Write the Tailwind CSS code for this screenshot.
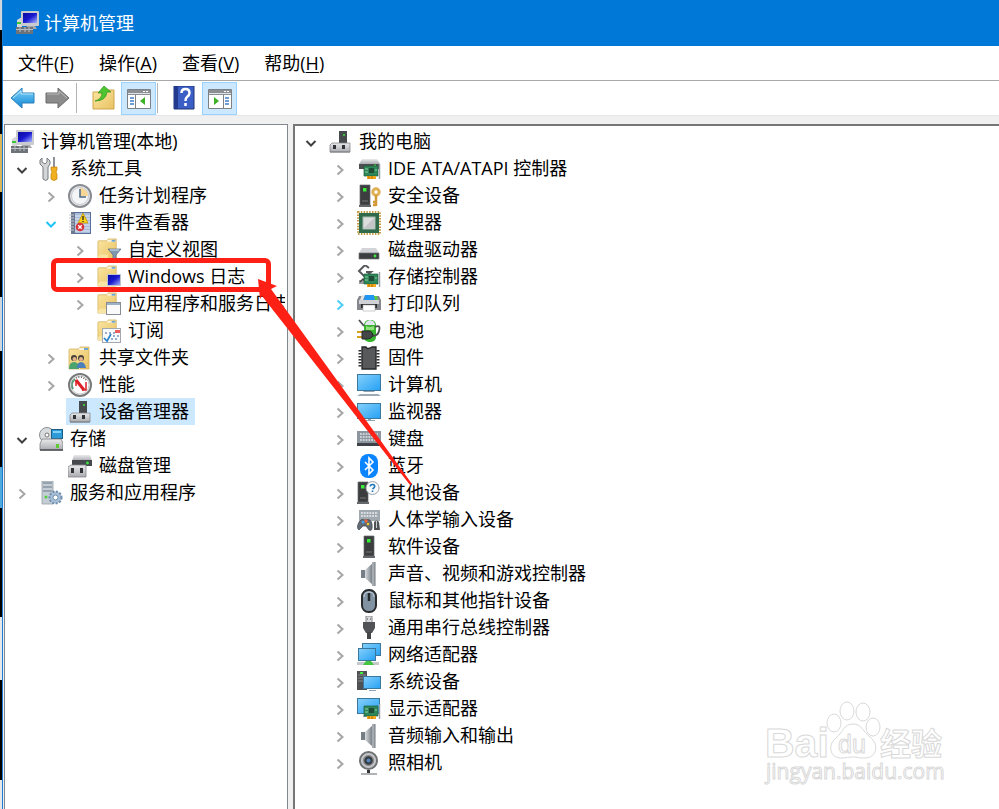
<!DOCTYPE html>
<html lang="zh-CN">
<head>
    <meta charset="UTF-8">
    <meta name="viewport" content="width=device-width, initial-scale=1.0">
    <title>计算机管理</title>
    <script src="https://cdn.jsdelivr.net/npm/@tailwindcss/browser@4"></script>
</head>
<body class="relative flex h-screen overflow-hidden bg-black font-['Open_Sans','Noto_Sans_CJK_SC',sans-serif] text-lg leading-[27px] text-black">

    <!-- Icon set, 24x24 each -->
    <svg class="absolute size-0" aria-hidden="true">
        <defs>
            <linearGradient id="gBlue" x1="0" y1="0" x2="1" y2="1"><stop offset="0" stop-color="#86d0fa"/><stop offset="1" stop-color="#25a1f5"/></linearGradient>
            <linearGradient id="gDark" x1="0" y1="0" x2="1" y2="1"><stop offset="0" stop-color="#0a0a9c"/><stop offset=".5" stop-color="#1a1ad0"/><stop offset="1" stop-color="#a9b8ff"/></linearGradient>
            <linearGradient id="gGrey" x1="0" y1="0" x2="0" y2="1"><stop offset="0" stop-color="#e9eaec"/><stop offset="1" stop-color="#a9abb0"/></linearGradient>
            <linearGradient id="gFold" x1="0" y1="0" x2="1" y2="1"><stop offset="0" stop-color="#fbe6a2"/><stop offset="1" stop-color="#e8c263"/></linearGradient>
            <linearGradient id="gArrow" x1="0" y1="0" x2="0" y2="1"><stop offset="0" stop-color="#7fd4fb"/><stop offset="1" stop-color="#1287d4"/></linearGradient>
            <linearGradient id="gSpk" x1="0" y1="0" x2="1" y2="0"><stop offset="0" stop-color="#d9dde1"/><stop offset="1" stop-color="#6d757c"/></linearGradient>
        </defs>
        <symbol id="right" viewBox="0 0 24 24"><path d="M9.500 8.500l5 4.500-5 4.500" fill="none" stroke="currentColor" stroke-width="2"/></symbol>
        <symbol id="down" viewBox="0 0 24 24"><path d="M7.500 11l4.500 4.500 4.500-4.500" fill="none" stroke="currentColor" stroke-width="2"/></symbol>
        <symbol id="computer" viewBox="0 0 24 24">
            <path d="M2 9l5-3v11H2z" fill="#d5d6d8"/><path d="M2 11h4v2H2z" fill="#38c838"/>
            <rect x="6" y="0" width="18" height="15" rx="1" fill="#c9cbcf"/><rect x="8" y="2" width="14" height="10" fill="url(#gDark)"/>
            <path d="M12 15h8l2 3H11z" fill="#a6a8ad"/><rect x="1" y="16" width="17" height="7" fill="#6d7379"/>
            <path d="M1 18.500h17M5 16v5M10 16v5M14 16v5" stroke="#b9bfc4"/>
        </symbol>
        <symbol id="tools" viewBox="0 0 24 24">
            <path d="M3 1v4l3 2 2-2V1l3 3v3L9 10v12q-2 3-5 0V10L1 7V3z" fill="#d3d5d7" stroke="#777c80"/>
            <path d="M14 0h2v10h-2z" fill="#8d9296"/><path d="M12 10h6v3l-1 2 1 2v5q-3 3-6 0v-5l1-2-1-2z" fill="#f0b01f" stroke="#c4810d" stroke-width=".7"/>
        </symbol>
        <symbol id="clock" viewBox="0 0 24 24">
            <circle cx="12" cy="12" r="11" fill="#e7e9eb" stroke="#888c90" stroke-width="2"/><circle cx="12" cy="12" r="8.500" fill="#f3f5f7" stroke="#c4c8cc"/>
            <path d="M12 12V4a8 8 0 0 1 8 8z" fill="#f8d796"/><path d="M12 5v8h6" fill="none" stroke="#4b6a86" stroke-width="1.500"/>
        </symbol>
        <symbol id="events" viewBox="0 0 24 24">
            <rect x="3.500" y="1.500" width="19" height="21" fill="#a9bcdc" stroke="#58709c"/><path d="M6 5h16M6 8h16M6 11h16M6 14h16M6 17h16M6 20h16" stroke="#e0e8f5"/>
            <rect x="3" y="1" width="4" height="22" fill="#6b7890"/><path d="M1 4h5M1 7h5M1 10h5M1 13h5M1 16h5M1 19h5" stroke="#c4c8cf"/>
            <path d="M15 2l5 10H10z" fill="#ffd21a" stroke="#b98e00" stroke-width=".7"/><path d="M15 5v4m0 1v1" stroke="#222" stroke-width="1.300"/>
            <circle cx="12" cy="16" r="4.300" fill="#d8353c"/><path d="M10.300 14.300l3.400 3.400m0-3.400l-3.400 3.400" stroke="#fff" stroke-width="1.300"/>
        </symbol>
        <symbol id="folder" viewBox="0 0 24 24">
            <path d="M1 4q0-1 1-1h9l1-2h9v22H1z" fill="url(#gFold)" stroke="#d0a94e" stroke-width=".7"/><path d="M11 2h9v2h-9z" fill="#f7f3df"/><path d="M16 2h4v2h-4z" fill="#6aa7d8"/><path d="M1 20l3-2h8v5H1z" fill="#f8e4a4"/>
        </symbol>
        <symbol id="folder-filter" viewBox="0 0 24 24"><use href="#folder" x="-1" width="24" height="22"/><path d="M11 11h13l-5 6v6l-3-2v-4z" fill="#7e98b2" stroke="#5a6f84" stroke-width=".7"/><path d="M13 12h9" stroke="#d6e2ee"/></symbol>
        <symbol id="folder-screen" viewBox="0 0 24 24"><use href="#folder" x="-1" width="24" height="22"/><rect x="10.500" y="9.500" width="13" height="11" fill="url(#gDark)" stroke="#bfc5ce"/><path d="M14 22h7v1h-7z" fill="#8a8f96"/></symbol>
        <symbol id="folder-window" viewBox="0 0 24 24"><use href="#folder" x="-1" width="24" height="22"/><rect x="9.500" y="10.500" width="14" height="12" fill="#fafafa" stroke="#888d95"/><path d="M10 12h13" stroke="#9db1c7" stroke-width="2"/></symbol>
        <symbol id="folder-sub" viewBox="0 0 24 24"><use href="#folder" x="-1" width="24" height="22"/><rect x="5.500" y="9.500" width="18" height="14" fill="#f8f9fb" stroke="#a4a8ad"/><path d="M18 11h5v3h-5z" fill="#ed5b5b"/><path d="M8 14h2m2 0h2m2 0h2M16 17h2m2 0h2M14 20h2m2 0h2" stroke="#7894bd" stroke-width="1.500"/><path d="M7 19l3 3 4-7" fill="none" stroke="#2d83cc" stroke-width="1.700"/></symbol>
        <symbol id="shared" viewBox="0 0 24 24"><use href="#folder" width="24" height="24"/>
            <circle cx="6" cy="12" r="3" fill="#46413d"/><circle cx="6.500" cy="13" r="2" fill="#e6b48c"/><path d="M1 23q0-7 5-7t5 7z" fill="#4ba36e"/>
            <circle cx="13" cy="12" r="3" fill="#46413d"/><circle cx="13" cy="13" r="2" fill="#e6b48c"/><path d="M9 22q0-6 4-6t5 6z" fill="#4b7fbc"/></symbol>
        <symbol id="perf" viewBox="0 0 24 24"><circle cx="12" cy="12" r="11" fill="#f4f4f4" stroke="#77797b" stroke-width="2"/><circle cx="12" cy="12" r="9" fill="#fff" stroke="#c8caca"/>
            <path d="M5 16a8 8 0 0 1 2-10" fill="none" stroke="#5b9b7b" stroke-width="2"/><path d="M8 5a8 8 0 0 1 10 2" fill="none" stroke="#555" stroke-dasharray="1 1.500" stroke-width="1.500"/>
            <path d="M8 7l8 10" stroke="#db1f26" stroke-width="3"/><path d="M8 13V7M18 9v8h-4" fill="none" stroke="#db1f26" stroke-width="1.500"/></symbol>
        <symbol id="devmgr" viewBox="0 0 24 24"><path d="M11 1h8v14h-8z" fill="#474a4d"/><circle cx="16" cy="5" r="1" fill="#3bea3b"/>
            <path d="M4 13h18v9H2v-7z" fill="url(#gGrey)" stroke="#85878a" stroke-width=".8"/><path d="M5 15h3v4H5zM14 15h3v4h-3z" fill="#303236"/><path d="M2 22h20" stroke="#7d7f82"/></symbol>
        <symbol id="storage" viewBox="0 0 24 24"><circle cx="8" cy="8" r="7.500" fill="#d9dcde" stroke="#8b9093"/><circle cx="8" cy="8" r="2" fill="#fff" stroke="#777"/>
            <rect x="12.500" y="2.500" width="11" height="9" fill="#2d9bd8" stroke="#1b5f88"/><path d="M14 4h8v2h-8z" fill="#82d1f5"/>
            <path d="M3 12h19l2 4v7H1v-6z" fill="url(#gGrey)" stroke="#7e8083" stroke-width=".8"/><path d="M1 23h23" stroke="#4c4e50" stroke-width="1.500"/><rect x="17" y="17" width="3" height="4" fill="#5fca35"/></symbol>
        <symbol id="diskmgr" viewBox="0 0 24 24"><path d="M6 1h16l2 6H4z" fill="url(#gGrey)"/><path d="M4 6h20v6H4z" fill="#45484c"/><circle cx="19.500" cy="9" r="1.400" fill="#3bea3b"/>
            <path d="M3 11h15v12H0v-10z" fill="url(#gGrey)" stroke="#85878a" stroke-width=".8"/><path d="M3 14h3v5H3zM12 14h3v5h-3z" fill="#303236"/></symbol>
        <symbol id="services" viewBox="0 0 24 24"><path d="M3 0h11v23H3z" fill="#c5cdd4" stroke="#949ea7" stroke-width=".8"/><path d="M4 2h9M4 6h9M4 10h9" stroke="#8794a0" stroke-width="1.500"/><circle cx="7" cy="16" r="1.500" fill="#4ccf3b"/>
            <circle cx="16.500" cy="16.500" r="6" fill="#a8bfd6" stroke="#6d8eae" stroke-dasharray="2 1.500" stroke-width="2"/><circle cx="16.500" cy="16.500" r="2.500" fill="#fff" stroke="#6d8eae"/></symbol>
        <symbol id="card" viewBox="0 0 24 24"><path d="M7 9h14v10H7z" fill="#2f8759" stroke="#1b5d3a" stroke-width=".7"/><path d="M12 11h5v5h-5z" fill="#1f4c36"/><path d="M8 12h3M8 15h3M18 13h2" stroke="#8bd0a8"/><path d="M10 19h9v3h-9z" fill="#f2a81d"/><path d="M12 19v3m3-3v3" stroke="#b76c06"/><path d="M22.500 7v15" stroke="#9aa0a5" stroke-width="1.500"/></symbol>
        <symbol id="ide" viewBox="0 0 24 24"><path d="M5 2h15l3 5H2z" fill="url(#gGrey)"/><path d="M2 7h20v5H2z" fill="#4c4f52"/><circle cx="18" cy="8.500" r="1" fill="#3bea3b"/><use href="#card" width="24" height="24"/></symbol>
        <symbol id="tower" viewBox="0 0 24 24"><path d="M7 1h10v20H7z" fill="#3b3d3f" stroke="#66696c" stroke-width=".7"/><path d="M9 17h6" stroke="#777"/><path d="M6 21h12v2H6z" fill="#66696c"/><rect x="10" y="4" width="3.500" height="3.500" fill="#39ee39"/></symbol>
        <symbol id="security" viewBox="0 0 24 24"><use href="#tower" x="-4" width="24" height="24"/><circle cx="19" cy="8" r="3.200" fill="#fff" stroke="#dfb054" stroke-width="3"/><path d="M19 11v11M16 18h3M16 21h3" stroke="#d19a34" stroke-width="2.500"/></symbol>
        <symbol id="cpu" viewBox="0 0 24 24"><rect x="1" y="1" width="22" height="22" fill="none" stroke="#c19c45" stroke-width="2" stroke-dasharray="1.500 1.300"/><rect x="2" y="2" width="20" height="20" fill="#2f6b4b"/><rect x="6" y="6" width="12" height="12" fill="#dcdddd" stroke="#a5b8ad"/><path d="M7 17L17 7v10z" fill="#c3c5c7"/></symbol>
        <symbol id="disk" viewBox="0 0 24 24"><path d="M5 10h14l3 5H2z" fill="#d2d4d7"/><path d="M2 15h20v6H2z" fill="#3c3f42" stroke="#6f7275" stroke-width=".7"/><circle cx="18" cy="18" r="1.400" fill="#3bea3b"/></symbol>
        <symbol id="storctl" viewBox="0 0 24 24"><path d="M2 15h18v4H2z" fill="#999da0"/><path d="M12 3L8 0 2 6l6 6 6-5H9" fill="none" stroke="#55585b" stroke-width="2"/><path d="M3 17l3-3 3 3" fill="none" stroke="#444" stroke-width="1.500"/><use href="#card" width="24" height="24"/></symbol>
        <symbol id="printer" viewBox="0 0 24 24"><path d="M2 4h20l2 4v10H0V8z" fill="#85888c"/><path d="M5 3h3L6 8H3z" fill="#e4e6e8"/><path d="M8 3h9l1 5H7z" fill="#2196f3"/><path d="M17 4h3l1 4h-3z" fill="#56cc45"/><path d="M2 8h20v4H2z" fill="#d0d2d5"/><path d="M4 12h16v4H4z" fill="#292b2d"/><path d="M6 13h12v6H6z" fill="#fff" stroke="#aaa" stroke-width=".6"/></symbol>
        <symbol id="battery" viewBox="0 0 24 24"><rect x="7" y="1" width="12" height="22" rx="5" fill="#37b52f"/><path d="M8 6q0-4 5-5 5 1 5 5z" fill="#e1e5ef"/><path d="M9 7q4 2 8 0v4H9z" fill="#92df7c"/><path d="M2 1l5 6M18 8q6-3 4 4-1 5-7 5" fill="none" stroke="#4a4d4f" stroke-width="1.800"/><path d="M0 13h6m-6 5h6" stroke="#d7a31f" stroke-width="2"/><path d="M5 12h4q6-1 7 4-1 4-7 4H5z" fill="#444648" stroke="#252627"/></symbol>
        <symbol id="chip" viewBox="0 0 24 24"><path d="M3 4v18M21 4v18" stroke="#303133" stroke-width="3" stroke-dasharray="1.500 1.500"/><path d="M5 1h4q1 3 6 0h4v22H5z" fill="#58595b" stroke="#252627" stroke-width="1.300"/></symbol>
        <symbol id="pc" viewBox="0 0 24 24"><rect x=".5" y="1.500" width="23" height="16" fill="url(#gBlue)" stroke="#3c789c"/><path d="M7 18h10l1 1H6z" fill="#8da4b4"/><path d="M0 23l3-2h18l3 2z" fill="#9aaab7"/></symbol>
        <symbol id="monitor" viewBox="0 0 24 24"><rect x=".5" y="3.500" width="23" height="15" fill="url(#gBlue)" stroke="#3c789c"/><path d="M11 19h3v1h4v1H7v-1h4z" fill="#8da4b4"/></symbol>
        <symbol id="keyboard" viewBox="0 0 24 24"><rect x="0" y="4" width="24" height="15" fill="#8d969e"/><path d="M3 7h18M3 10h18M3 13h18" stroke="#e2e5e8" stroke-width="1.700" stroke-dasharray="1.800 1"/><path d="M0 16h24v3H0z" fill="#3f4347"/></symbol>
        <symbol id="bluetooth" viewBox="0 0 24 24"><rect x="3" y="0" width="18" height="24" rx="8" fill="#0a84ff"/><path d="M8 8l8 8-4 4V4l4 4-8 8" fill="none" stroke="#fff" stroke-width="1.600"/></symbol>
        <symbol id="unknown" viewBox="0 0 24 24"><use href="#tower" x="-6" width="24" height="24"/><circle cx="15.500" cy="7" r="6.500" fill="#f8fafb" stroke="#9ea3a7"/><path d="M13.300 5.500q0-2 2.200-2t2.200 2q0 1-2.200 2.500m0 1.500v1.500" fill="none" stroke="#1d76bb" stroke-width="1.600"/></symbol>
        <symbol id="hid" viewBox="0 0 24 24"><rect x="2" y="2" width="21" height="11" fill="#a1a9b0"/><path d="M4 5h17M4 8h17" stroke="#eef0f2" stroke-width="1.700" stroke-dasharray="1.800 1"/><path d="M2 22q-3-2 0-8 2-4 6-2 6-2 7 4 1 8-3 6l-3-4H6z" fill="#626b74" stroke="#3e454b" stroke-width=".7"/><circle cx="9" cy="13" r="1.700" fill="#f0643c"/><circle cx="6" cy="14" r="1.500" fill="#46a4ed"/><circle cx="11" cy="16" r="1.300" fill="#f2c32b"/><path d="M17 14q3-3 5 0l1 8h-6z" fill="#4f5356"/><path d="M19.500 13v7" stroke="#ccd0d3"/></symbol>
        <symbol id="speaker" viewBox="0 0 24 24"><path d="M4 8h5v8H4z" fill="#777f86"/><path d="M8 8L16 1v22l-8-7z" fill="url(#gSpk)"/><path d="M15 0h3v24h-3z" fill="#a6acb1"/><path d="M18 0v24" stroke="#73787c"/></symbol>
        <symbol id="mouse" viewBox="0 0 24 24"><rect x="5" y="1" width="14" height="22" rx="6.500" fill="#8192a3" stroke="#292b2d" stroke-width="2"/><path d="M7 8q0-5 5-5M17 8q0-5-5-5" stroke="#c7d2dc" fill="none"/><path d="M12 4v8" stroke="#25282a" stroke-width="2.500"/></symbol>
        <symbol id="usb" viewBox="0 0 24 24"><path d="M9 0h6v7H9z" fill="#d9dadb" stroke="#85878a"/><path d="M10 3h1m2 0h1" stroke="#444"/><path d="M6 6h12v6l-3 5H9l-3-5z" fill="#515356"/><path d="M12 16v7" stroke="#444648" stroke-width="4"/></symbol>
        <symbol id="network" viewBox="0 0 24 24"><rect x="5.500" y=".5" width="18" height="12" fill="url(#gBlue)" stroke="#3c789c"/><rect x="1.500" y="5.500" width="17" height="12" fill="url(#gBlue)" stroke="#3c789c"/><path d="M0 20.500h22" stroke="#c5c9cb" stroke-width="3"/><path d="M9 18h5l3 4H6z" fill="#45c541"/></symbol>
        <symbol id="system" viewBox="0 0 24 24"><path d="M0 1h10v19H0z" fill="#4f5254"/><path d="M1 5h8M1 8h8M1 11h8" stroke="#85898c"/><rect x="3" y="2" width="3" height="2" fill="#43ec43"/><rect x="6.500" y="6.500" width="17" height="12" fill="url(#gBlue)" stroke="#3c789c"/><path d="M12 20h7v1h-7z" fill="#8da4b4"/></symbol>
        <symbol id="display" viewBox="0 0 24 24"><rect x=".5" y="1.500" width="22" height="15" fill="url(#gBlue)" stroke="#3c789c"/><path d="M6 19h7v1H6z" fill="#8da4b4"/><use href="#card" width="24" height="24"/></symbol>
        <symbol id="camera" viewBox="0 0 24 24"><circle cx="11.500" cy="9.500" r="8.500" fill="#c7c9cb" stroke="#707376" stroke-width="2"/><circle cx="11.500" cy="9.500" r="5" fill="#383b40" stroke="#8c8f93" stroke-width="1.500"/><circle cx="11.500" cy="9.500" r="2" fill="#5488bd"/><path d="M10 19h3v3h-3z" fill="#333"/><path d="M4 23h16" stroke="#96999b" stroke-width="1.500"/></symbol>
    </svg>

    <!-- Sliver of the desktop behind the window -->
    <div class="flex w-0.5 shrink-0 flex-col" aria-hidden="true">
        <div class="h-[30px] bg-gray-300"></div>
        <div class="h-[104px]"></div>
        <div class="h-[58px] bg-[#d9b55e]"></div>
        <div class="h-[105px]"></div>
        <div class="h-[54px] bg-gray-300"></div>
        <div class="h-[116px]"></div>
        <div class="h-[41px] bg-[#4fa9dc]"></div>
        <div class="h-[109px]"></div>
        <div class="h-[63px] bg-gray-200"></div>
        <div class="h-[100px]"></div>
        <div class="grow bg-gray-200"></div>
    </div>

    <div class="flex min-w-0 flex-1 flex-col border-l border-[#1a7fd4] bg-[#f0f0f0]">
        <header class="flex h-[46px] shrink-0 items-center gap-[5px] bg-[#0078d7] pl-3 text-white">
            <svg class="size-6"><use href="#computer"/></svg>
            <h1>计算机管理</h1>
        </header>

        <nav class="flex h-[35px] shrink-0 items-center gap-[25px] border-b border-[#a8a8a8] bg-white pl-[15px]">
            <button>文件(<u class="underline-offset-2">F</u>)</button>
            <button>操作(<u class="underline-offset-2">A</u>)</button>
            <button>查看(<u class="underline-offset-2">V</u>)</button>
            <button>帮助(<u class="underline-offset-2">H</u>)</button>
        </nav>

        <div class="flex h-[35px] shrink-0 items-center border-b border-gray-200 bg-white pl-[7px]">
            <button class="mr-2.5" aria-label="后退"><svg class="h-6 w-[25px]" viewBox="0 0 25 24"><path d="M1 12L12 2v5h12v10H12v5z" fill="url(#gArrow)" stroke="#2a7fb8"/><path d="M3 12l8-7v3h12" fill="none" stroke="#b7e6fb"/></svg></button>
            <button aria-label="前进"><svg class="h-6 w-[25px]" viewBox="0 0 25 24"><path d="M24 12L13 2v5H1v10h12v5z" fill="#8b8b8b" stroke="#6b6b6b"/><path d="M2 8h12V5l8 7" fill="none" stroke="#bbb"/></svg></button>
            <div class="mx-[6px] h-[30px] w-px bg-[#b4b4b4]"></div>
            <button class="mr-[5px] ml-[9px]" aria-label="向上"><svg class="size-6" viewBox="0 0 24 24"><path d="M1 6h9l2-2h10v19H1z" fill="url(#gFold)" stroke="#cfa549"/><path d="M3 15q7-2 7-8H6l6-7 7 6h-4q-1 9-12 9z" fill="#4cc531" stroke="#2f9419" stroke-width=".7"/></svg></button>
            <button class="flex h-[33px] w-[35px] items-center justify-center border border-[#99d1ff] bg-[#cce8ff]" aria-label="显示/隐藏控制台树"><svg class="size-6" viewBox="0 0 24 24"><path d="M.5 3.500h23v19H.5z" fill="#fff" stroke="#7d8085"/><path d="M1 4h22v5H1z" fill="#8c8f94"/><path d="M16 5.500h2m1 0h2" stroke="#fff"/><path d="M1 7.500h22" stroke="#dfe2e6"/><path d="M8.500 9v13" stroke="#7d8085"/><path d="M3 12h4M3 15h4M3 18h4" stroke="#3f7fc4" stroke-width="1.500"/><path d="M18 11v8l-5-4z" fill="#3db229"/></svg></button>
            <div class="mr-3.5 ml-px h-[30px] w-px bg-[#b4b4b4]"></div>
            <button class="mr-[6px]" aria-label="帮助"><svg class="size-6" viewBox="0 0 24 24"><path d="M2 0h20v23H2z" fill="#3b5fc4" stroke="#1e3479"/><path d="M2 0h4v23H2z" fill="#23398d"/><path d="M9.500 7q0-4 4-4t4 4q0 2-2.500 4-1.500 1-1.500 4m0 2v3" fill="none" stroke="#fff" stroke-width="2.500"/></svg></button>
            <button class="flex h-[33px] w-[35px] items-center justify-center border border-[#99d1ff] bg-[#cce8ff]" aria-label="显示/隐藏操作窗格"><svg class="size-6" viewBox="0 0 24 24"><path d="M.5 3.500h23v19H.5z" fill="#fff" stroke="#7d8085"/><path d="M1 4h22v5H1z" fill="#8c8f94"/><path d="M16 5.500h2m1 0h2" stroke="#fff"/><path d="M1 7.500h22" stroke="#dfe2e6"/><path d="M15.500 9v13" stroke="#7d8085"/><path d="M17 12h4M17 15h4M17 18h4" stroke="#3f7fc4" stroke-width="1.500"/><path d="M6 11v8l5-4z" fill="#3db229"/></svg></button>
        </div>

        <main class="flex min-h-0 flex-1 gap-[5px] pt-2 pl-px">
            <!-- Console tree -->
            <section class="w-[284px] shrink-0 border border-b-0 border-[#828790] bg-white pt-[3px] pr-0.5 pl-[5px] whitespace-nowrap">
                <div class="flex h-[27px] items-center gap-[7px]"><svg class="size-6"><use href="#computer"/></svg><span>计算机管理(本地)</span></div>
                <ul id="consoleTree" class="overflow-hidden"></ul>
            </section>
            <!-- Device list -->
            <section class="min-w-0 flex-1 overflow-hidden border-t-2 border-l-2 border-[#767676] bg-white pt-0.5 pl-1 whitespace-nowrap">
                <ul id="deviceTree"></ul>
            </section>
        </main>
    </div>

    <!-- Callout -->
    <div class="absolute top-[258px] left-[51px] h-[34px] w-[220px] rounded-md border-5 border-[#ff2015]"></div>
    <svg class="absolute top-[270px] left-[250px] h-[220px] w-[170px]" viewBox="250 270 170 220" aria-hidden="true">
        <path d="M258 279l19 7-6 3 141 195-2 1-148-189-2 3z" fill="#ff2015"/>
    </svg>

    <!-- Watermark -->
    <svg class="absolute right-[50px] bottom-5 h-[90px] w-[185px]" viewBox="0 0 185 90" fill="#fff" stroke="#d9d9d9" role="img" aria-label="Baidu 经验">
        <g font-family="Liberation Sans, sans-serif" font-weight="bold">
            <text x="1" y="58" font-size="41">Bai</text>
            <ellipse cx="70" cy="24" rx="7" ry="9"/><ellipse cx="83" cy="12" rx="7" ry="9"/><ellipse cx="99" cy="13" rx="7" ry="9"/><ellipse cx="109" cy="28" rx="7" ry="9"/>
            <path d="M89 25c9 0 10 8 17 13 10 8 6 21-5 21-6 0-8-1-12-1s-7 1-12 1c-11 0-14-13-5-20 8-7 8-14 17-14z"/>
            <text x="74" y="54" font-size="25" font-weight="normal">du</text>
        </g>
        <text x="116" y="56" font-size="31" font-family="Noto Sans CJK SC, sans-serif" font-weight="bold">经验</text>
        <text x="2" y="80" font-size="21" font-family="Open Sans, sans-serif">jingyan.baidu.com</text>
    </svg>

    <script>
        // [icon, label, state, children]
        const consoleItems = [
            ['tools', '系统工具', 'open', [
                ['clock', '任务计划程序', 'closed'],
                ['events', '事件查看器', 'open-hot', [
                    ['folder-filter', '自定义视图', 'closed'],
                    ['folder-screen', 'Windows 日志', 'closed'],
                    ['folder-window', '应用程序和服务日志', 'closed'],
                    ['folder-sub', '订阅', 'leaf'],
                ]],
                ['shared', '共享文件夹', 'closed'],
                ['perf', '性能', 'closed'],
                ['devmgr', '设备管理器', 'selected'],
            ]],
            ['storage', '存储', 'open', [
                ['diskmgr', '磁盘管理', 'leaf'],
            ]],
            ['services', '服务和应用程序', 'closed'],
        ];

        const deviceItems = [
            ['devmgr', '我的电脑', 'open', [
                ['ide', 'IDE ATA/ATAPI 控制器', 'closed'],
                ['security', '安全设备', 'closed'],
                ['cpu', '处理器', 'closed'],
                ['disk', '磁盘驱动器', 'closed'],
                ['storctl', '存储控制器', 'closed'],
                ['printer', '打印队列', 'closed-hot'],
                ['battery', '电池', 'closed'],
                ['chip', '固件', 'closed'],
                ['pc', '计算机', 'closed'],
                ['monitor', '监视器', 'closed'],
                ['keyboard', '键盘', 'closed'],
                ['bluetooth', '蓝牙', 'closed'],
                ['unknown', '其他设备', 'closed'],
                ['hid', '人体学输入设备', 'closed'],
                ['tower', '软件设备', 'closed'],
                ['speaker', '声音、视频和游戏控制器', 'closed'],
                ['mouse', '鼠标和其他指针设备', 'closed'],
                ['usb', '通用串行总线控制器', 'closed'],
                ['network', '网络适配器', 'closed'],
                ['system', '系统设备', 'closed'],
                ['display', '显示适配器', 'closed'],
                ['speaker', '音频输入和输出', 'closed'],
                ['camera', '照相机', 'closed'],
            ]],
        ];

        const chevronColor = {
            'open': 'text-[#404040]',
            'closed': 'text-[#a6a6a6]',
            'open-hot': 'text-[#1cc4f7]',
            'closed-hot': 'text-[#4ccdf8]',
        };

        function renderItem([icon, label, state, children]) {
            const color = chevronColor[state];
            const chevron = color
                ? `<button class="size-6 ${color}" aria-label="${label}"><svg class="size-6"><use href="#${children ? 'down' : 'right'}"/></svg></button>`
                : '<span class="size-6"></span>';
            const selected = state === 'selected' ? 'bg-[#cce8ff]' : '';
            return `
                <li>
                    <div class="flex h-[27px] items-center gap-[3px]">
                        ${chevron}
                        <span class="flex h-[27px] items-center gap-[7px] pr-1.5 pl-0.5 ${selected}">
                            <svg class="size-6 shrink-0"><use href="#${icon}"/></svg>
                            <span>${label}</span>
                        </span>
                    </div>
                    ${children ? `<ul class="pl-[29px]">${children.map(renderItem).join('')}</ul>` : ''}
                </li>`;
        }

        document.getElementById('consoleTree').innerHTML = consoleItems.map(renderItem).join('');
        document.getElementById('deviceTree').innerHTML = deviceItems.map(renderItem).join('');
    </script>
</body>
</html>
